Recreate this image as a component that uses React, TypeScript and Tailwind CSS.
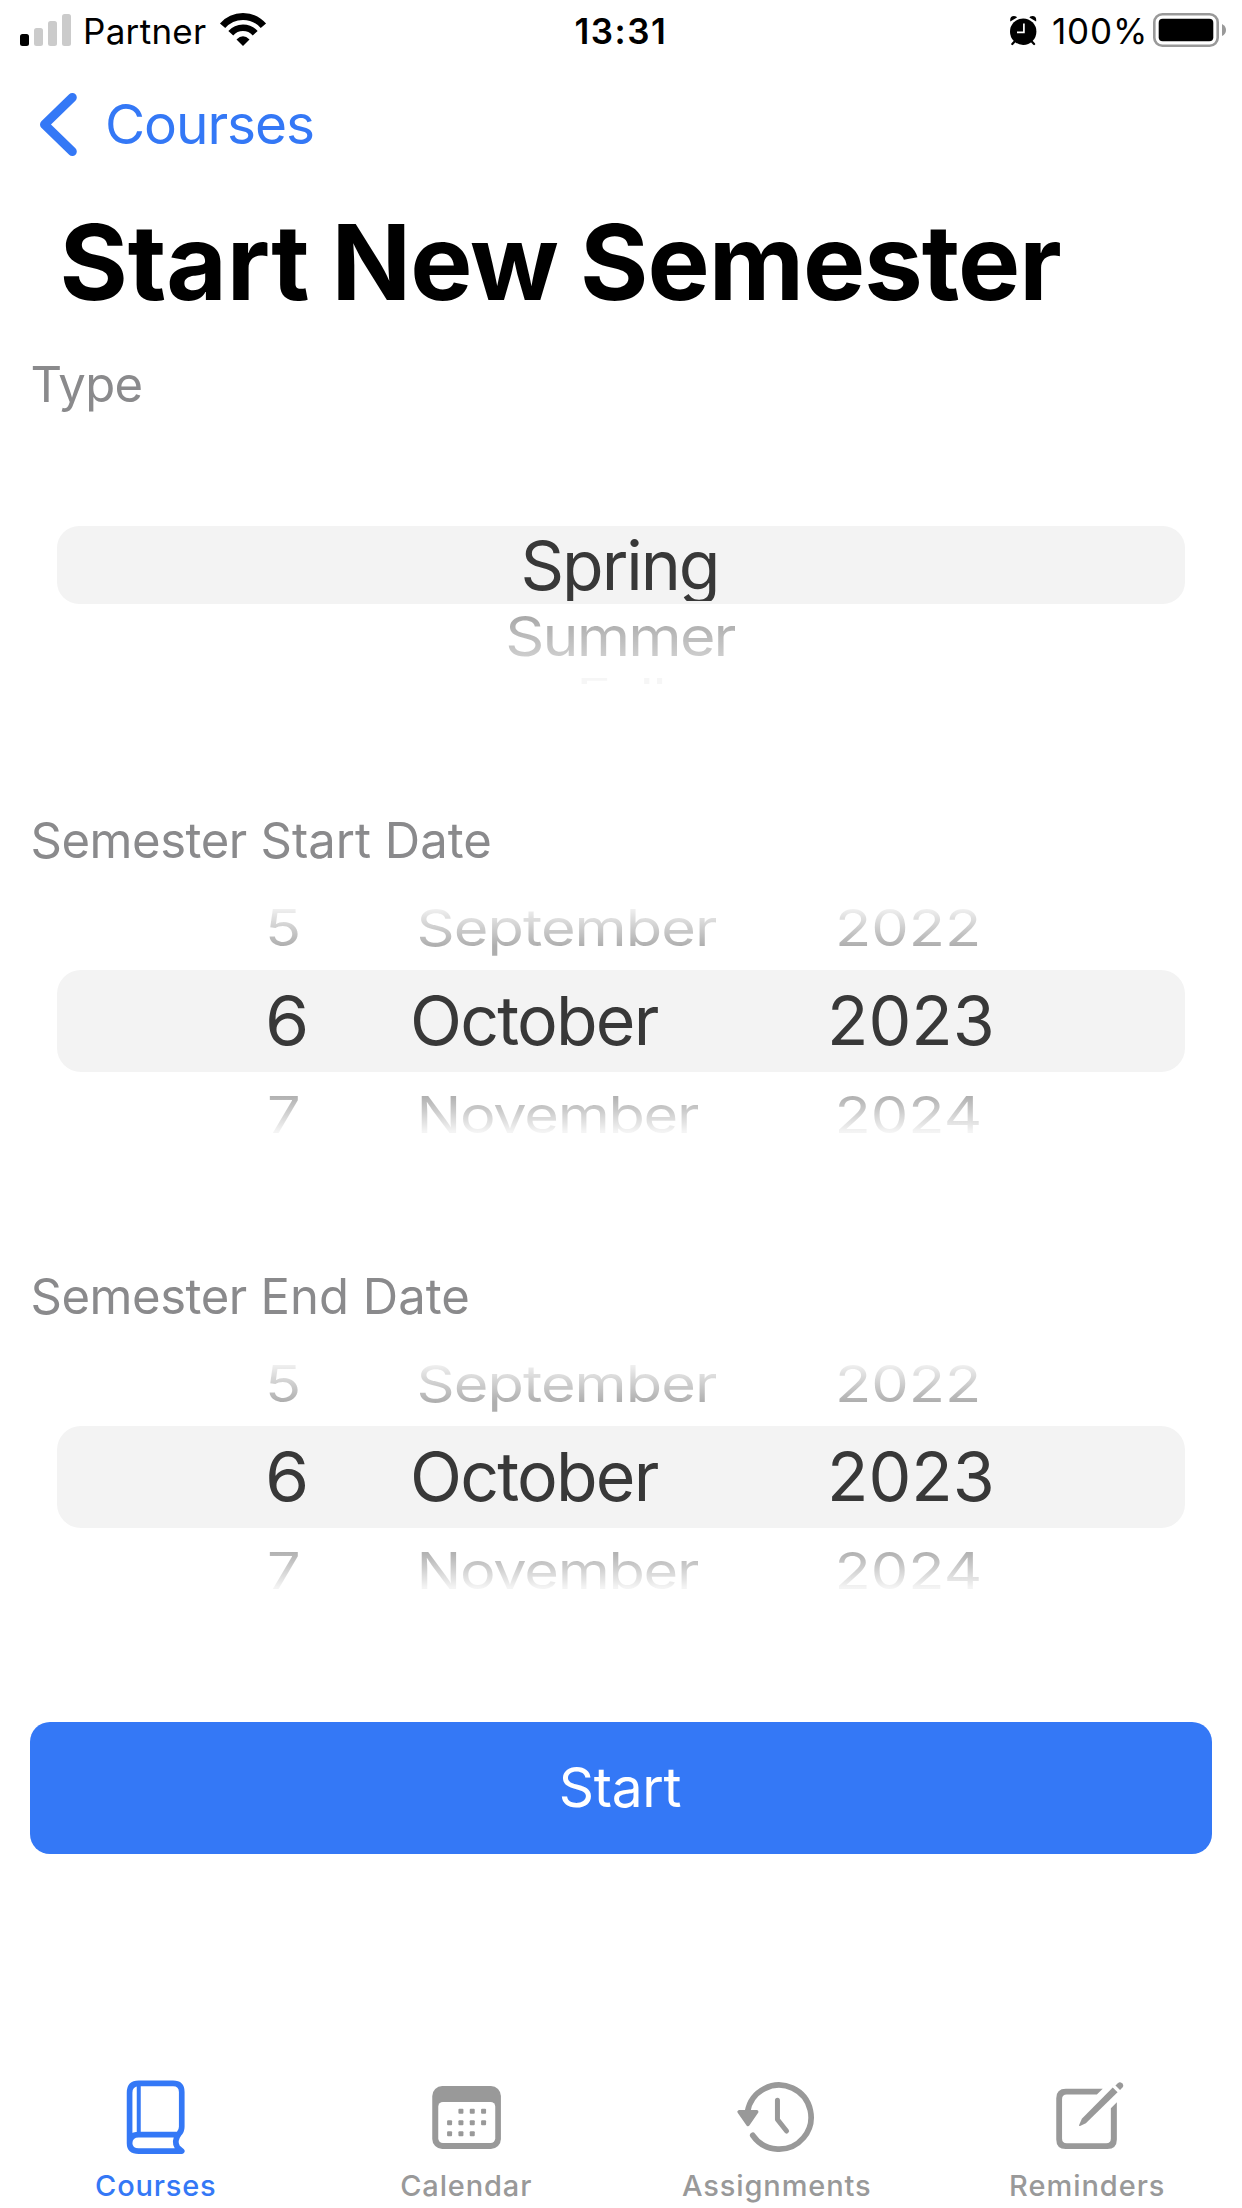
import type { ReactNode } from "react";

function StatusBar() {
  return (
    <header className="flex h-[62px] items-center text-[35px] leading-[62px] text-black">
      <svg className="ml-5 h-[62px] w-[51px]" viewBox="20 0 51 62">
        <rect x="20" y="34" width="9" height="12" rx="2.5" fill="#000" />
        <rect x="34" y="28" width="9" height="18" rx="2.5" fill="#cbcbcb" />
        <rect x="48" y="21" width="9" height="25" rx="2.5" fill="#cbcbcb" />
        <rect x="62" y="14" width="9" height="32" rx="2.5" fill="#cbcbcb" />
      </svg>
      <span className="ml-[12px] w-[133px] tracking-[0.3px]">Partner</span>
      <svg className="h-[62px] w-[54px]" viewBox="216 0 54 62" fill="none" stroke="#000" strokeWidth="6.6">
        <path d="M222.6 25.8A27 27 0 0 1 263.4 25.8" strokeWidth="7" />
        <path d="M230.8 33.2A16.3 16.3 0 0 1 255.2 33.2" />
        <path d="M236.5 39.6Q243 32.8 249.5 39.6L243 46Z" fill="#000" stroke="none" />
      </svg>
      <time className="ml-[304.5px] font-semibold tracking-[1.5px]">13:31</time>
      <div className="ml-auto flex items-center">
        <svg className="h-[62px] w-[32px]" viewBox="1008 0 32 62">
          <circle cx="1023.2" cy="31.7" r="13.2" />
          <path d="M1010.3 21.5Q1009.5 16.2 1014 16Q1016.8 16 1017 17.6ZM1036.1 21.5Q1036.9 16.2 1032.4 16Q1029.6 16 1029.4 17.6Z" />
          <path d="M1012.3 44L1016 40M1034.1 44L1030.4 40" stroke="#000" strokeWidth="2.2" strokeLinecap="round" />
          <path d="M1023.9 23.5V32.4H1017" stroke="#fff" strokeWidth="1.7" fill="none" />
        </svg>
        <span className="ml-[12px] w-[101px] tracking-[0.85px]">100%</span>
        <svg className="mr-[14px] h-[62px] w-[75px]" viewBox="1153 0 75 62">
          <rect x="1154.3" y="14.3" width="63.4" height="31.4" rx="8" fill="none" stroke="#999" strokeWidth="2.6" />
          <rect x="1158.7" y="18.8" width="54.6" height="22.4" rx="4" />
          <path d="M1222 24Q1226 26 1226 30Q1226 34 1222 36Z" fill="#999" />
        </svg>
      </div>
    </header>
  );
}

function NavBar() {
  return (
    <div className="flex h-[124px] items-center text-[#3478f6]">
      <svg className="ml-9 h-[72px] w-[45px]" viewBox="36 88 45 72" fill="none" stroke="currentColor" strokeWidth="9" strokeLinecap="round" strokeLinejoin="round">
        <path d="M72.3 97.5L44.5 124.5L72.3 151.5" />
      </svg>
      <span className="ml-6 text-[55px] leading-[124px] tracking-[-1.08px]">Courses</span>
    </div>
  );
}

function Label({ children }: { children: ReactNode }) {
  return <h2 className="pl-[30.5px] text-[49px] leading-[94px] pb-px text-[#8a8a8c]">{children}</h2>;
}

function TypePicker() {
  return (
    <div className="h-[362px] px-[57px] pt-[94px] text-center">
      <div className="h-[78px] rounded-[22px] bg-[#f3f3f3]">
        <div className="h-[75px] overflow-hidden pr-[3px] text-[68px] leading-[78px] tracking-[-2.05px] text-[#383838]">Spring</div>
      </div>
      <div className="h-[63px] pr-[2px]">
        <span className="inline-block scale-y-90 bg-linear-to-b from-[#a8a8a8] from-13% to-[#cecece] to-87% bg-clip-text text-[61px] leading-[64px] tracking-[-1.87px] text-transparent">
          Summer
        </span>
      </div>
      <div className="h-[17px] overflow-hidden">
        <span className="inline-block scale-y-60 text-[58px] leading-[48px] tracking-[-1.1px] text-[#f6f6f6]">Fall</span>
      </div>
    </div>
  );
}

function DatePicker() {
  return (
    <div className="h-[361px] px-[57px]">
      <div className="grid h-[81px] grid-cols-[151.5px_418.5px_1fr] items-start justify-items-start pl-[208px] text-[59.5px] leading-[76px] text-transparent *:scale-y-[0.843] *:bg-linear-to-b *:from-[#f2f2f2] *:from-20% *:to-[#aeaeae] *:to-80% *:bg-clip-text">
        <span>5</span>
        <span className="tracking-[-0.95px]">September</span>
        <span>2022</span>
      </div>
      <div className="grid h-[102px] grid-cols-[145px_417px_1fr] justify-items-start rounded-[24px] bg-[#f3f3f3] pl-[208px] text-[68px] leading-[101px] text-[#383838]">
        <span className="origin-left scale-x-105">6</span>
        <span className="tracking-[-1.8px]">October</span>
        <span>2023</span>
      </div>
      <div className="grid h-[84px] grid-cols-[149.5px_418px_1fr] justify-items-start pl-[210px] text-[59.5px] leading-[84px] text-transparent *:scale-y-[0.843] *:bg-linear-to-b *:from-[#b0b0b0] *:from-24% *:to-[#f4f4f4] *:to-75% *:bg-clip-text">
        <span>7</span>
        <span className="tracking-[-1.29px]">November</span>
        <span>2024</span>
      </div>
    </div>
  );
}

function BookIcon() {
  return (
    <svg className="h-20 w-[90px]" viewBox="150.75 54 270 240" fill="none" stroke="currentColor" strokeWidth="17" strokeLinecap="round" strokeLinejoin="round">
      <path d="M209.5 250V98Q209.5 70 237 70H340Q366 70 366 96V200Q366 212 358 221Q341 244 353 262L366 273.5H237Q209.5 273.5 209.5 250Q209.5 224 237 224H355" />
      <path d="M237 75V220" strokeWidth="12" strokeLinecap="butt" />
    </svg>
  );
}

const calendarDots: [number, number][] = [
  [1202, 154], [1236, 154], [1270, 154],
  [1168, 188], [1202, 188], [1236, 188], [1270, 188],
  [1168, 221], [1202, 221], [1236, 221],
];

function CalendarIcon() {
  return (
    <svg className="h-20 w-[90px]" viewBox="1082.25 54 270 240" fill="currentColor">
      <rect x="1116" y="78" width="206" height="189" rx="30" />
      <rect x="1134" y="126" width="171" height="123" rx="14" fill="#fff" />
      {calendarDots.map(([x, y]) => (
        <rect key={`${x}-${y}`} x={x - 7.5} y={y - 7.5} width="15" height="15" rx="3" />
      ))}
    </svg>
  );
}

function HistoryIcon() {
  return (
    <svg className="h-20 w-[90px]" viewBox="731.25 2078 90 80" fill="none" stroke="currentColor" strokeWidth="5.7" strokeLinecap="round" strokeLinejoin="round">
      <path d="M747.8 2111.5A32 32 0 1 1 753 2135.3" />
      <path d="M739.3 2111.8H757L748.2 2124.5Z" fill="currentColor" strokeWidth="3.4" />
      <path d="M777.7 2100.3V2119.5L786.8 2131" strokeWidth="5" />
    </svg>
  );
}

function ComposeIcon() {
  return (
    <svg className="h-20 w-[90px]" viewBox="1041.75 2078 90 80" fill="currentColor">
      <path d="M1102.5 2088.7H1065.5Q1056 2088.7 1056 2098.2V2139.5Q1056 2149 1065.5 2149H1107Q1116.6 2149 1116.6 2139.5V2102.2L1110.6 2108.2V2138.5Q1110.6 2143.2 1106 2143.2H1066.5Q1061.8 2143.2 1061.8 2138.5V2099.2Q1061.8 2094.6 1066.5 2094.6H1096.6Z" />
      <path d="M1112.5 2087.5L1117.3 2092.3L1085.6 2123.2L1079.8 2126Q1078.4 2126.4 1078.9 2125L1081.6 2118.8Z" />
      <path d="M1115.2 2085.6L1117.6 2083.2Q1119.6 2081.4 1121.8 2083.2Q1124 2085.4 1122.2 2087.6L1119.8 2090Z" />
    </svg>
  );
}

const tabs = [
  { label: "Courses", icon: <BookIcon />, style: "text-[#3478f6] tracking-[0.8px]" },
  { label: "Calendar", icon: <CalendarIcon />, style: "text-[#999] tracking-[0.87px]" },
  { label: "Assignments", icon: <HistoryIcon />, style: "text-[#999] tracking-[0.87px]" },
  { label: "Reminders", icon: <ComposeIcon />, style: "text-[#999] tracking-[0.95px]" },
];

export default function App() {
  return (
    <div className="flex h-[2208px] w-[1242px] flex-col overflow-hidden bg-white font-['Inter',sans-serif]">
      <StatusBar />
      <NavBar />
      <h1 className="pl-[59.5px] text-[104.5px] leading-[152px] font-bold tracking-[-1px] whitespace-nowrap text-black [word-spacing:-1.5px]">
        <span className="tracking-[-0.2px]">Start</span> New Semester
      </h1>
      <div className="-mb-px">
        <Label>
          <span className="tracking-[-0.7px]">Type</span>
        </Label>
      </div>
      <TypePicker />
      <Label>
        <span className="tracking-[-0.45px]">Semester</span> Start Date
      </Label>
      <DatePicker />
      <Label>
        <span className="tracking-[-0.45px]">Semester</span> End Date
      </Label>
      <DatePicker />
      <button className="mx-[30px] mt-4 h-[132px] rounded-[20px] bg-[#3478f6] pr-[2px] pb-px text-[55px] leading-[131px] tracking-[-0.25px] text-white">
        Start
      </button>
      <nav className="mt-auto grid grid-cols-4">
        {tabs.map((tab) => (
          <a key={tab.label} className={`flex flex-col items-center text-[29px] leading-[45px] font-medium ${tab.style}`}>
            {tab.icon}
            <span className="mt-[5px] pl-px">{tab.label}</span>
          </a>
        ))}
      </nav>
    </div>
  );
}
